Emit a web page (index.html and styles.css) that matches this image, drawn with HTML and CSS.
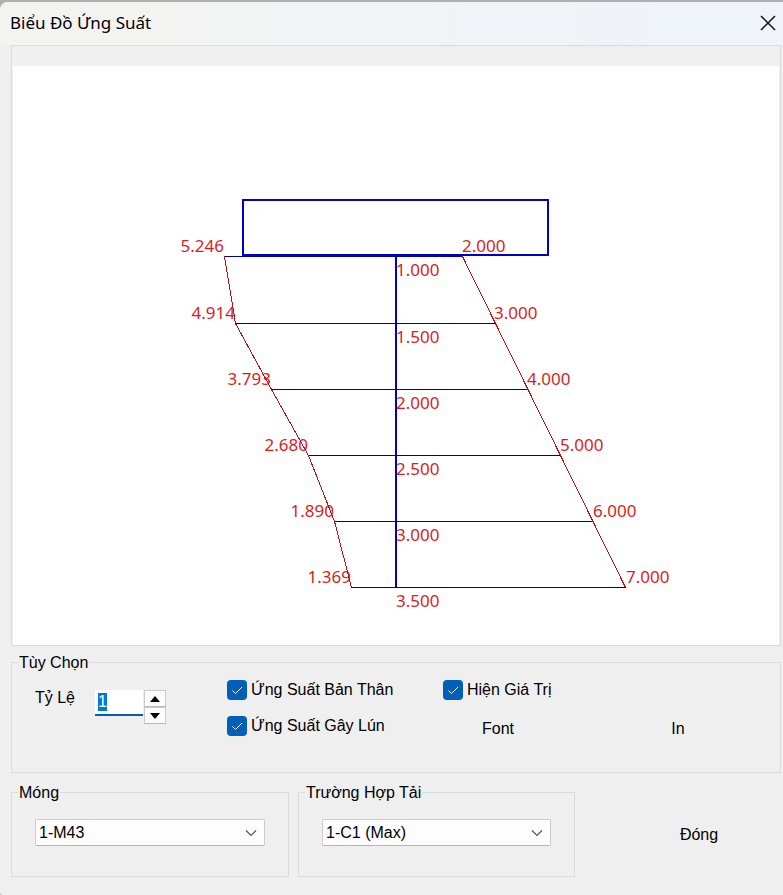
FILE: index.html
```html
<!DOCTYPE html>
<html lang="vi">
<head>
<meta charset="utf-8">
<meta name="viewport" content="width=device-width, initial-scale=1">
<title>Biểu Đồ Ứng Suất</title>
<link rel="stylesheet" href="styles.css">
</head>
<body>
<main class="window">
  <header class="titlebar">
    <h1 class="title">Biểu Đồ Ứng Suất</h1>
    <button class="close" type="button" aria-label="Close">
      <svg width="16" height="16" viewBox="0 0 16 16" aria-hidden="true"><path d="M1 1L15 15M15 1L1 15"/></svg>
    </button>
  </header>
  <div class="content">
    <section class="panel">
      <svg class="chart" viewBox="13 66 766 579" role="img" aria-label="Biểu Đồ Ứng Suất">
        <g class="values">
          <text x="396" y="276">1.000</text>
          <text x="396" y="343">1.500</text>
          <text x="396" y="409">2.000</text>
          <text x="396" y="475">2.500</text>
          <text x="396" y="541">3.000</text>
          <text x="396" y="607">3.500</text>
          <text x="462" y="252">2.000</text>
          <text x="494" y="319">3.000</text>
          <text x="527" y="385">4.000</text>
          <text x="560" y="451">5.000</text>
          <text x="593" y="517">6.000</text>
          <text x="626" y="583">7.000</text>
        </g>
        <g class="values left">
          <text x="224" y="252">5.246</text>
          <text x="235" y="319">4.914</text>
          <text x="271" y="385">3.793</text>
          <text x="308" y="451">2.680</text>
          <text x="334" y="517">1.890</text>
          <text x="351" y="583">1.369</text>
        </g>
        <path class="level" d="M224 256.500H462M235 323.500H495M271 389.500H528M308 455.500H561M334 521.500H594M351 587.500H626"/>
        <path class="footing" d="M243 200H548V255H243ZM396 256V587"/>
        <path class="curve" d="M224.500 256.500L235.500 323.500L271.500 389.500L308.500 455.500L334.500 521.500L351.500 587.500"/>
        <path class="curve" d="M462.500 256.500L625.500 587.500"/>
      </svg>
    </section>

    <fieldset class="group options">
      <legend>Tùy Chọn</legend>
      <div class="scale">
        <label for="scale">Tỷ Lệ</label>
        <div class="spinner">
          <input id="scale" type="text" inputmode="numeric" value="1" autofocus>
          <div class="steps">
            <button type="button" aria-label="Tăng"><svg width="10" height="6" viewBox="0 0 10 6" aria-hidden="true"><path d="M5 0L10 6H0Z"/></svg></button>
            <button type="button" aria-label="Giảm"><svg width="10" height="6" viewBox="0 0 10 6" aria-hidden="true"><path d="M0 0H10L5 6Z"/></svg></button>
          </div>
        </div>
      </div>
      <div class="checks">
        <label class="check"><input type="checkbox" checked>Ứng Suất Bản Thân</label>
        <label class="check"><input type="checkbox" checked>Ứng Suất Gây Lún</label>
      </div>
      <div class="checks">
        <label class="check"><input type="checkbox" checked>Hiện Giá Trị</label>
        <div class="actions">
          <button class="flat" type="button">Font</button>
          <button class="flat" type="button">In</button>
        </div>
      </div>
    </fieldset>

    <div class="bottom">
      <fieldset class="group pick">
        <legend id="footing-label">Móng</legend>
        <select aria-labelledby="footing-label"><option>1-M43</option></select>
      </fieldset>
      <fieldset class="group pick">
        <legend id="case-label">Trường Hợp Tải</legend>
        <select aria-labelledby="case-label"><option>1-C1 (Max)</option></select>
      </fieldset>
      <div class="dismiss"><button class="flat" type="button">Đóng</button></div>
    </div>
  </div>
</main>
<script src="script.js"></script>
</body>
</html>
```
FILE: styles.css
```css
* {
  box-sizing: border-box;
}

html {
  background: #b0b0b0;
}

body {
  margin: 0;
  padding-top: 2px;
  color: #000;
  font: 16px/20px "Liberation Sans", Arial, sans-serif;
}

button,
input,
select {
  margin: 0;
  color: inherit;
  font: inherit;
}

button {
  display: flex;
  align-items: center;
  justify-content: center;
  padding: 0;
  border: 0;
  background: none;
}

.window {
  min-height: calc(100vh - 2px);
  border-radius: 8px 0 0 3px;
  background: #efefef;
}

.titlebar {
  display: flex;
  align-items: center;
  justify-content: space-between;
  height: 43px;
  padding: 0 7px 2px 10px;
  border-radius: 8px 0 0 0;
  background: linear-gradient(90deg, #f3f3f2 20%, #eff3fa 85%);
}

.title {
  margin: 0;
  font: 400 17px/24px "Noto Sans", "Open Sans", sans-serif;
}

.close svg {
  fill: none;
  stroke: #111;
  stroke-width: 1.5;
}

.content {
  padding: 0 2px 18px 11px;
}

.panel {
  padding: 20px 1px 0;
  border: 1px solid #dcdcdc;
}

.chart {
  display: block;
  width: 100%;
  background: #fff;
}

.chart path {
  fill: none;
  shape-rendering: crispEdges;
}

.values {
  fill: #d81e1e;
  font: 17px "Noto Sans", "Open Sans", sans-serif;
}

.left {
  text-anchor: end;
}

.level {
  stroke: #0000a0;
}

.footing {
  stroke: #0000c8;
  stroke-width: 2;
}

.curve {
  stroke: #b41414;
}

.group {
  min-width: 0;
  margin: 0;
  padding: 0;
  border: 1px solid #dcdcdc;
}

.group legend {
  margin-left: -17px;
  padding: 2px 1px 0;
}

.options {
  display: grid;
  grid-template-columns: 192px 216px 1fr;
  height: 122px;
  margin-top: 5px;
  padding: 7px 23px 0;
}

.scale {
  display: flex;
  align-items: flex-start;
  padding-top: 8px;
}

.scale label {
  width: 60px;
}

.spinner {
  display: flex;
  align-items: flex-start;
  gap: 1px;
  padding-top: 2px;
}

.spinner input {
  width: 48px;
  height: 26px;
  padding: 0 3px;
  border: 0;
  border-bottom: 2px solid #005fb8;
  outline: 0;
  background: #fff;
}

.spinner input::selection {
  background: #0078d7;
  color: #fff;
}

.steps button {
  width: 22px;
  height: 17px;
  border: 1px solid #ccc;
  border-bottom-color: #b8b8b8;
  background: #fbfbfb;
}

.checks {
  display: flex;
  flex-direction: column;
  gap: 16px;
}

.check {
  display: flex;
  gap: 4px;
}

.check input {
  width: 20px;
  height: 20px;
  border-radius: 4px;
  appearance: none;
  background: #005fb8;
}

.check input:checked {
  background: #005fb8 url("data:image/svg+xml,%3Csvg xmlns='http://www.w3.org/2000/svg' viewBox='0 0 20 20'%3E%3Cpath d='M5.500 10.500L8.500 13.500L15 7' fill='none' stroke='white'/%3E%3C/svg%3E");
}

.actions {
  display: flex;
  gap: 70px;
}

.flat {
  width: 110px;
  height: 26px;
}

.bottom {
  display: grid;
  grid-template-columns: 278fr 277fr 197fr;
  gap: 9px;
  margin-top: 8px;
}

.pick {
  height: 96px;
  padding: 16px 23px 0;
}

.pick select {
  display: block;
  width: 100%;
  height: 27px;
  padding: 0 3px;
  border: 1px solid #ccc;
  border-bottom-color: #b4b4b4;
  border-radius: 2px;
  appearance: none;
  background: #fdfdfd url("data:image/svg+xml,%3Csvg xmlns='http://www.w3.org/2000/svg' width='12' height='8' viewBox='0 0 12 8'%3E%3Cpath d='M1 1.500L6 6.500L11 1.500' fill='none' stroke='%23555' stroke-width='1.200'/%3E%3C/svg%3E") no-repeat right 7px center;
}

.dismiss {
  display: flex;
  justify-content: flex-end;
  padding: 41px 27px 0 0;
}
```
FILE: script.js
```js
const scale = document.getElementById("scale");
scale.focus();
scale.select();
```
